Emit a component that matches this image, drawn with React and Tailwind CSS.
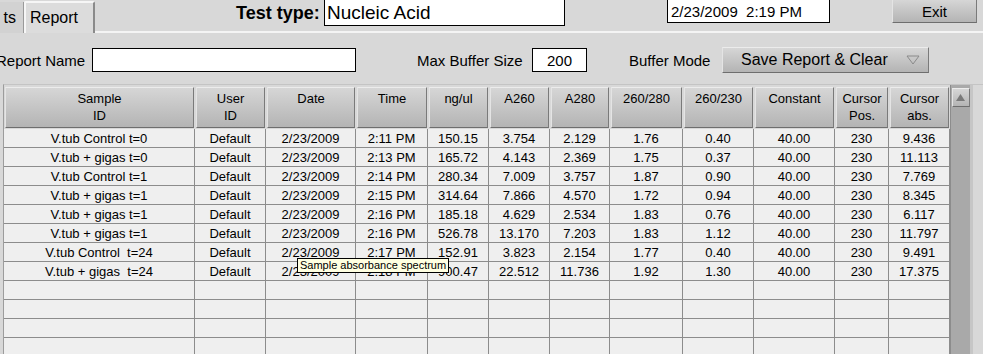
import React from 'react';

const cols = [
  { w: 191, h: ['Sample', 'ID'] },
  { w: 71, h: ['User', 'ID'] },
  { w: 90, h: ['Date'] },
  { w: 72, h: ['Time'] },
  { w: 61, h: ['ng/ul'] },
  { w: 61, h: ['A260'] },
  { w: 60, h: ['A280'] },
  { w: 73, h: ['260/280'] },
  { w: 71, h: ['260/230'] },
  { w: 81, h: ['Constant'] },
  { w: 54, h: ['Cursor', 'Pos.'] },
  { w: 61, h: ['Cursor', 'abs.'] },
];

const rows = [
  ['V.tub Control t=0', 'Default', '2/23/2009', '2:11 PM', '150.15', '3.754', '2.129', '1.76', '0.40', '40.00', '230', '9.436'],
  ['V.tub + gigas t=0', 'Default', '2/23/2009', '2:13 PM', '165.72', '4.143', '2.369', '1.75', '0.37', '40.00', '230', '11.113'],
  ['V.tub Control t=1', 'Default', '2/23/2009', '2:14 PM', '280.34', '7.009', '3.757', '1.87', '0.90', '40.00', '230', '7.769'],
  ['V.tub + gigas t=1', 'Default', '2/23/2009', '2:15 PM', '314.64', '7.866', '4.570', '1.72', '0.94', '40.00', '230', '8.345'],
  ['V.tub + gigas t=1', 'Default', '2/23/2009', '2:16 PM', '185.18', '4.629', '2.534', '1.83', '0.76', '40.00', '230', '6.117'],
  ['V.tub + gigas t=1', 'Default', '2/23/2009', '2:16 PM', '526.78', '13.170', '7.203', '1.83', '1.12', '40.00', '230', '11.797'],
  ['V.tub Control  t=24', 'Default', '2/23/2009', '2:17 PM', '152.91', '3.823', '2.154', '1.77', '0.40', '40.00', '230', '9.491'],
  ['V.tub + gigas  t=24', 'Default', '2/23/2009', '2:18 PM', '900.47', '22.512', '11.736', '1.92', '1.30', '40.00', '230', '17.375'],
  ...Array.from({ length: 4 }, () => Array(12).fill('')),
];

const raised =
  'bg-gradient-to-b from-[#d6d6d6] to-[#b4b4b4] border border-t-[#ececec] border-l-[#e4e4e4] border-b-[#6e6e6e] border-r-[#7a7a7a]';

export default function App() {
  return (
    <div
      className="w-[983px] h-[354px] overflow-hidden bg-[#d8d8d8] text-black relative"
      style={{ fontFamily: '"Liberation Sans", Arial, sans-serif' }}
    >
      {/* top strip */}
      <div className="h-[33px] flex items-start border-b-2 border-[#f4f4f4] whitespace-nowrap">
        <div className="flex h-[33px] items-end">
          <div className="w-[25px] h-[31px] -ml-[1px] bg-[#d2d2d2] border-r border-[#9a9a9a] flex items-center justify-end pr-[7px] text-[16px] leading-none">
            ts
          </div>
          <div className="w-[71px] h-[32px] bg-[#dcdcdc] border-l-2 border-t-2 border-[#f6f6f6] border-r-2 border-r-[#8a8a8a] rounded-t-[2px] flex items-center pl-[4px] text-[16px] leading-none">
            Report
          </div>
        </div>
        <div className="ml-[141px] mt-[1px] w-[85px] text-[18px] font-bold leading-[24px]">Test type:</div>
        <div className="ml-[3px] -mt-[1px] w-[241px] h-[27px] bg-white border border-black flex items-center px-[2px] text-[19px] leading-none">
          Nucleic Acid
        </div>
        <div className="ml-[102px] -mt-[1px] w-[163px] h-[24px] bg-white border border-black flex items-center px-[3px] text-[15px] leading-none">
          2/23/2009&nbsp;&nbsp;2:19 PM
        </div>
        <div className={`ml-[62px] -mt-[1px] w-[85px] h-[24px] flex items-center justify-center text-[15px] leading-none ${raised}`}>
          Exit
        </div>
      </div>

      {/* controls */}
      <div className="h-[51px] flex items-start pt-[15px] text-[15px] whitespace-nowrap">
        <div className="-ml-[4px] w-[89px] h-[24px] flex items-center leading-none">Report Name</div>
        <div className="ml-[7px] w-[264px] h-[24px] bg-white border border-black"></div>
        <div className="ml-[61px] w-[104px] h-[24px] flex items-center leading-none">Max Buffer Size</div>
        <div className="ml-[11px] w-[55px] h-[24px] bg-white border border-black flex items-center justify-center leading-none">
          200
        </div>
        <div className="ml-[42px] w-[84px] h-[24px] flex items-center leading-none">Buffer Mode</div>
        <div className={`ml-[9px] -mt-[1px] w-[207px] h-[26px] flex items-center text-[16px] leading-none ${raised}`}>
          <span className="ml-[18px]">Save Report &amp; Clear</span>
          <svg width="14" height="10" viewBox="0 0 14 10" className="ml-auto mr-[8px]">
            <path d="M1 1 L13 1 L7 9 Z" fill="none" stroke="#8a8a8a" strokeWidth="1" />
          </svg>
        </div>
      </div>

      {/* table */}
      <div className="flex ml-[3px] border-l border-t border-l-[#9c9c9c] border-t-[#c4c4c4]">
        <div className="flex flex-col">
          <div className="flex h-[44px] pt-[2px] pb-[1px]">
            {cols.map((c, i) => (
              <div key={i} style={{ width: c.w }} className="h-[41px] px-[1px]">
                <div className={`h-full flex flex-col items-center pt-[2px] text-[13px] leading-[17px] ${raised}`}>
                  {c.h.map((t, j) => (
                    <span key={j}>{t}</span>
                  ))}
                </div>
              </div>
            ))}
          </div>
          {rows.map((r, ri) => (
            <div key={ri} className="flex h-[19px] border-b border-[#8c8c8c] bg-[#efefef]">
              {r.map((v, ci) => (
                <div
                  key={ci}
                  style={{ width: cols[ci].w }}
                  className="h-full flex items-center justify-center pt-[1px] text-[13px] leading-none border-r border-[#8c8c8c] whitespace-pre"
                >
                  {v}
                </div>
              ))}
            </div>
          ))}
        </div>
        <div className="w-[20px] bg-[#a9a9a9] border-l border-[#8c8c8c] pt-[3px] flex flex-col items-center">
          <div className={`w-[18px] h-[19px] flex items-center justify-center ${raised}`}>
            <svg width="9" height="7" viewBox="0 0 9 7">
              <path d="M4.5 0 L9 7 L0 7 Z" fill="#7a7a7a" />
            </svg>
          </div>
        </div>
        <div className="w-[3px] bg-[#c6c6c6]"></div>
      </div>

      {/* tooltip */}
      <div className="absolute left-[297px] top-[258px] h-[15px] px-[2px] bg-[#ffffe1] border border-black text-[11px] leading-[13px] whitespace-nowrap">
        Sample absorbance spectrum
      </div>
    </div>
  );
}
